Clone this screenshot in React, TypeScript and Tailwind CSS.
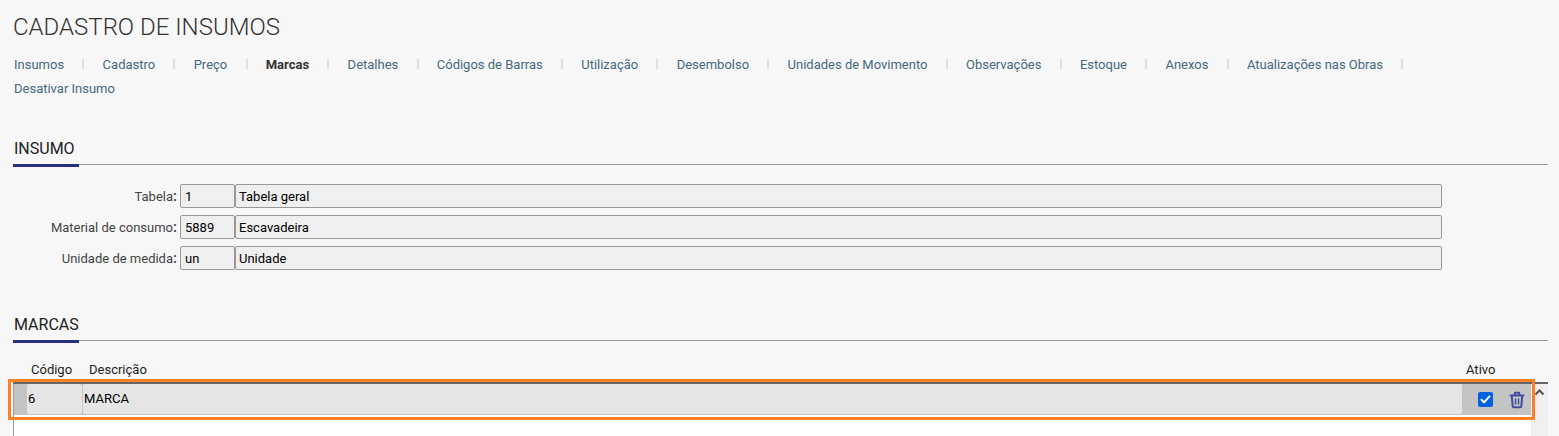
import { useState } from 'react';

const tabs = [
  'Insumos',
  'Cadastro',
  'Preço',
  'Marcas',
  'Detalhes',
  'Códigos de Barras',
  'Utilização',
  'Desembolso',
  'Unidades de Movimento',
  'Observações',
  'Estoque',
  'Anexos',
  'Atualizações nas Obras',
  'Desativar Insumo',
];

const fields = [
  { id: 'tabela', label: 'Tabela', code: '1', value: 'Tabela geral' },
  { id: 'material', label: 'Material de consumo', code: '5889', value: 'Escavadeira' },
  { id: 'unidade', label: 'Unidade de medida', code: 'un', value: 'Unidade' },
];

function SectionTitle({ children }: { children: string }) {
  return (
    <div className="flex border-b border-[#999]">
      <h2 className="-mb-[3px] min-w-[66px] border-b-[3px] border-[#283084] pb-[3px] pl-px text-base leading-6 text-[#222]">
        {children}
      </h2>
    </div>
  );
}

function TrashIcon() {
  return (
    <svg
      width="16"
      height="18"
      viewBox="0 0 16 18"
      fill="none"
      stroke="#434ca0"
      strokeWidth="2"
      strokeLinecap="round"
      strokeLinejoin="round"
    >
      <path d="M1.5 4.5h13M5.3 4.2l.7-2.4h4l.7 2.4M2.8 5l.9 10.3q.1.9 1 .9h6.6q.9 0 1-.9L13.2 5" />
      <path d="M6.5 8v5M9.5 8v5" strokeWidth="1.5" />
    </svg>
  );
}

export default function App() {
  const [active, setActive] = useState(true);

  return (
    <main className="flex min-h-screen flex-col bg-[#f7f7f7] pl-[13px] pr-[11px] pt-3 font-['Roboto',sans-serif] text-[13px] text-[#222]">
      <h1 className="text-2xl font-light leading-[30px] text-[#333]">CADASTRO DE INSUMOS</h1>

      {/* Abas do cadastro */}
      <nav className="mt-[11px] pl-px pr-10" aria-label="Cadastro de insumos">
        <ul className="leading-6">
          {tabs.map((tab, i) => (
            <li key={tab} className="inline">
              <a
                href="#"
                className={
                  tab === 'Marcas'
                    ? 'whitespace-nowrap font-bold text-[#333]'
                    : 'whitespace-nowrap text-[#45697d] hover:underline'
                }
                aria-current={tab === 'Marcas' ? 'page' : undefined}
              >
                {tab}
              </a>{' '}
              {i < tabs.length - 1 && (
                <span className="mx-[15px] inline-block h-[10px] w-[2px] bg-[#e0e0e0]" />
              )}{' '}
            </li>
          ))}
        </ul>
      </nav>

      <section className="mt-9">
        <SectionTitle>INSUMO</SectionTitle>
        <div className="mt-[19px] flex flex-col gap-[7px] pr-[106px]">
          {fields.map((field) => (
            <div key={field.id} className="flex items-center">
              <label htmlFor={field.id} className="mr-[3px] w-[164px] text-right text-[#444]">
                {field.label}
                <span className="text-[15px] font-medium">:</span>
              </label>
              <input
                id={field.id}
                readOnly
                value={field.code}
                className="h-6 w-[55px] rounded-xs border border-[#999] bg-[#efefef] px-1 text-black"
              />
              <input
                aria-label={field.label}
                readOnly
                value={field.value}
                className="h-6 min-w-0 flex-1 rounded-xs border border-[#999] bg-[#efefef] px-[3px] text-black"
              />
            </div>
          ))}
        </div>
      </section>

      <section className="mt-[43px] flex flex-1 flex-col">
        <SectionTitle>MARCAS</SectionTitle>
        <div className="relative mt-4 flex flex-1">
          <div className="flex flex-1 flex-col">
            <table className="w-full table-fixed border-separate border-spacing-0">
              <thead>
                <tr className="h-[27px] text-left">
                  <th className="w-[14px] border-b-2 border-[#666]" />
                  <th className="w-14 border-b-2 border-[#666] pl-1 font-normal">Código</th>
                  <th className="border-b-2 border-[#666] pl-[6px] font-normal">Descrição</th>
                  <th className="w-[41px] border-b-2 border-[#666] pl-1 font-normal">Ativo</th>
                  <th className="w-[28px] border-b-2 border-[#666]" />
                </tr>
              </thead>
              <tbody>
                <tr className="h-[31px] bg-[#c4c4c4]">
                  <td className="border-l border-[#999]" />
                  <td className="pb-px pr-px">
                    <input
                      aria-label="Código"
                      readOnly
                      value="6"
                      className="block h-[30px] w-full rounded-xs bg-[#e5e5e5] px-px pb-px text-black"
                    />
                  </td>
                  <td className="pb-px">
                    <input
                      aria-label="Descrição"
                      readOnly
                      value="MARCA"
                      className="block h-[30px] w-full rounded-xs bg-[#e5e5e5] px-px pb-px text-black"
                    />
                  </td>
                  <td>
                    <div className="relative ml-4 h-[15px] w-[15px]">
                      <input
                        type="checkbox"
                        aria-label="Ativo"
                        checked={active}
                        onChange={(e) => setActive(e.target.checked)}
                        className="block h-[15px] w-[15px] appearance-none rounded-xs bg-white checked:bg-[#0060df]"
                      />
                      <svg
                        viewBox="0 0 15 15"
                        className="pointer-events-none absolute inset-0"
                        fill="none"
                        stroke="#fff"
                        strokeWidth="2"
                        strokeLinecap="round"
                        strokeLinejoin="round"
                      >
                        <path d="M3.5 7.8l2.6 2.6 5.4-6" />
                      </svg>
                    </div>
                  </td>
                  <td>
                    <button type="button" aria-label="Excluir marca" className="ml-[6px] block">
                      <TrashIcon />
                    </button>
                  </td>
                </tr>
              </tbody>
            </table>
            <div className="flex-1 border-l border-[#999] bg-white" />
          </div>

          {/* Barra de rolagem */}
          <div className="mt-[25px] w-[17px] border-t-2 border-[#666] bg-[#f0f0f0]">
            <svg width="17" height="17" viewBox="0 0 17 17" fill="none" stroke="#555" strokeWidth="2">
              <path d="M4.5 10.5l4-4 4 4" />
            </svg>
          </div>

          {/* Destaque da linha selecionada */}
          <div className="pointer-events-none absolute -left-[5px] right-[13px] top-[22px] h-[41px] border-[3px] border-[#ff7f27]" />
        </div>
      </section>
    </main>
  );
}
